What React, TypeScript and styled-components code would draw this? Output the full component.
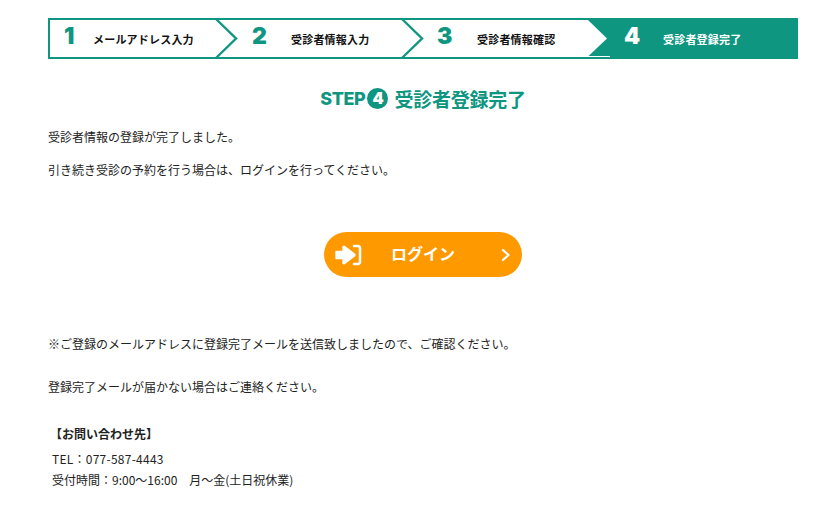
import React from "react";
import styled, { createGlobalStyle } from "styled-components";

const GlobalStyle = createGlobalStyle`
  html, body {
    margin: 0;
    padding: 0;
    background: #fff;
    color: #222;
    font-family: "Noto Sans CJK JP", "Noto Sans", sans-serif;
  }
`;

const steps = [
  { no: "1", label: "メールアドレス入力", width: 166, pad: 14, gap: 18 },
  { no: "2", label: "受診者情報入力", width: 186, pad: 36, gap: 28 },
  { no: "3", label: "受診者情報確認", width: 186, pad: 35, gap: 29 },
  { no: "4", label: "受診者登録完了", width: 208, pad: 36, gap: 28 },
];

const App = () => {
  return (
    <Page>
      <GlobalStyle />
      <Stepper>
        {steps.map((s, i) => (
          <Step key={s.no} $width={s.width} $pad={s.pad} $active={i === 3}>
            <StepNo $active={i === 3}>{s.no}</StepNo>
            <StepLabel $active={i === 3} $gap={s.gap}>
              {s.label}
            </StepLabel>
          </Step>
        ))}
        <Chevrons viewBox="0 0 750 41" width="750" height="41">
          <path d="M168 1 L188 20.5 L168 40" fill="#fff" stroke="#0f9681" strokeWidth="2.4" />
          <path d="M354 1 L374 20.5 L354 40" fill="#fff" stroke="#0f9681" strokeWidth="2.4" />
          <path d="M540 2 L559 20.5 L540 38.5 Z" fill="#fff" />
          <path d="M540 38.5 L562 38.5" stroke="#fff" strokeWidth="1" />
        </Chevrons>
      </Stepper>

      <Heading>
        <StepWord>STEP</StepWord>
        <StepCircle>4</StepCircle>
        <span>受診者登録完了</span>
      </Heading>

      <Text>受診者情報の登録が完了しました。</Text>
      <Text $top={13}>引き続き受診の予約を行う場合は、ログインを行ってください。</Text>

      <LoginButton>
        <LoginIcon viewBox="0 0 27 22" width="27" height="22">
          <path d="M1 7.5 H8 V3 a0.8 0.8 0 0 1 1.3 -0.6 L19.5 10 a1.3 1.3 0 0 1 0 2 L9.3 19.6 A0.8 0.8 0 0 1 8 19 V14.5 H1 Z" fill="#fff" stroke="#fff" strokeWidth="1.4" strokeLinejoin="round" />
          <path d="M19 2 H22.5 a2.5 2.5 0 0 1 2.5 2.5 V17.5 a2.5 2.5 0 0 1 -2.5 2.5 H19" fill="none" stroke="#fff" strokeWidth="2.5" strokeLinecap="round" />
        </LoginIcon>
        <LoginLabel>ログイン</LoginLabel>
        <LoginArrow viewBox="0 0 10 14" width="10" height="14">
          <path d="M2 2 L7.5 7 L2 12" fill="none" stroke="#fff" strokeWidth="2.3" strokeLinecap="round" strokeLinejoin="round" />
        </LoginArrow>
      </LoginButton>

      <Text>※ご登録のメールアドレスに登録完了メールを送信致しましたので、ご確認ください。</Text>
      <Text $top={23}>登録完了メールが届かない場合はご連絡ください。</Text>

      <ContactTitle>【お問い合わせ先】</ContactTitle>
      <ContactList>
        <ContactLine $spacing={0.25}>TEL：077-587-4443</ContactLine>
        <ContactLine>受付時間：9:00～16:00　月～金(土日祝休業)</ContactLine>
      </ContactList>
    </Page>
  );
};

export default App;

const Page = styled.div`
  width: 750px;
  padding: 18px 0 0 48px;
`;

const Stepper = styled.div`
  position: relative;
  display: flex;
  width: 750px;
  height: 41px;
  box-sizing: border-box;
  border: 2px solid #0f9681;
`;

const Step = styled.div<{ $width: number; $pad: number; $active: boolean }>`
  display: flex;
  align-items: center;
  flex: none;
  box-sizing: border-box;
  width: ${(p) => p.$width}px;
  padding-left: ${(p) => p.$pad}px;
  background: ${(p) => (p.$active ? "#0f9681" : "transparent")};
`;

const StepNo = styled.span<{ $active: boolean }>`
  width: 11px;
  margin-top: -4px;
  font-family: Inter, "Noto Sans", sans-serif;
  font-weight: 900;
  font-size: 23px;
  line-height: 1;
  color: ${(p) => (p.$active ? "#fff" : "#0f9681")};
`;

const StepLabel = styled.span<{ $active: boolean; $gap: number }>`
  margin-left: ${(p) => p.$gap}px;
  font-size: 11px;
  font-weight: 700;
  letter-spacing: 0.2px;
  white-space: nowrap;
  color: ${(p) => (p.$active ? "#fff" : "#111")};
`;

const Chevrons = styled.svg`
  position: absolute;
  left: -2px;
  top: -2px;
  pointer-events: none;
`;

const Heading = styled.h1`
  display: flex;
  justify-content: center;
  align-items: center;
  gap: 2px;
  height: 28px;
  margin: 25px 0 0;
  font-size: 19px;
  font-weight: 700;
  letter-spacing: -0.25px;
  color: #0f9681;
`;

const StepWord = styled.span`
  font-family: Inter, "Noto Sans", sans-serif;
  font-weight: 800;
  font-size: 18px;
  letter-spacing: -0.4px;
`;

const StepCircle = styled.span`
  display: flex;
  align-items: center;
  justify-content: center;
  width: 21px;
  height: 21px;
  margin-right: 4px;
  border-radius: 50%;
  background: #0f9681;
  color: #fff;
  font-family: Inter, "Noto Sans", sans-serif;
  font-size: 16px;
  font-weight: 900;
`;

const Text = styled.p<{ $top?: number }>`
  margin: ${(p) => p.$top ?? 15}px 0 0;
  font-size: 12px;
  line-height: 20px;
  color: #222;
`;

const LoginButton = styled.a`
  display: flex;
  align-items: center;
  box-sizing: border-box;
  width: 198px;
  height: 45px;
  margin: 52px auto 57px;
  padding: 0 11px;
  border-radius: 23px;
  background: #ff9900;
  color: #fff;
`;

const LoginIcon = styled.svg`
  flex: none;
`;

const LoginLabel = styled.span`
  flex: 1;
  padding: 0 17px 3px 0;
  text-align: center;
  font-size: 16px;
  font-weight: 700;
`;

const LoginArrow = styled.svg`
  flex: none;
`;

const ContactTitle = styled.p`
  margin: 27px 0 0 2px;
  font-size: 12px;
  font-weight: 700;
  line-height: 20px;
  color: #222;
`;

const ContactList = styled.div`
  display: flex;
  flex-direction: column;
  gap: 1px;
  margin: 5px 0 0 4px;
`;

const ContactLine = styled.p<{ $spacing?: number }>`
  margin: 0;
  font-size: 12px;
  line-height: 20px;
  letter-spacing: ${(p) => p.$spacing ?? 0}px;
  color: #222;
`;
